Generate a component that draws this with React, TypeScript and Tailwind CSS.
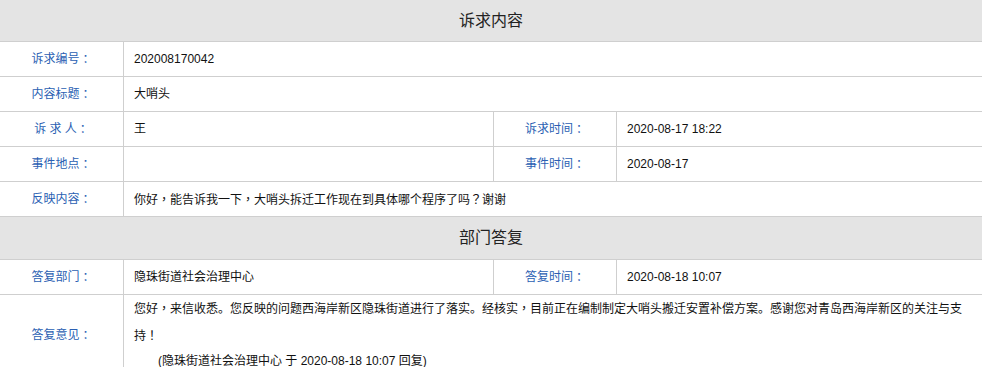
const font = { fontFamily: '"Liberation Sans", "Noto Sans CJK SC", sans-serif' };
const tc = { fontFamily: '"Noto Sans CJK TC", sans-serif' };

function Header({ title, tall }: { title: string; tall?: boolean }) {
  return (
    <div
      className={
        "flex items-center justify-center bg-[#e4e4e4] border-b border-[#cfcfcf] text-[16px] text-[#222] " +
        (tall ? "h-[43px]" : "h-[42px]")
      }
    >
      {title}
    </div>
  );
}

// full-width colon sits centred in its em box, as in the original page
function Label({ text, w = "w-[124px]" }: { text: string; w?: string }) {
  return (
    <div className={w + " shrink-0 flex items-center justify-center border-r border-[#cfcfcf] text-[#2b5fb3]"}>
      <span className="whitespace-pre">{text}</span>
      <span style={tc}>：</span>
    </div>
  );
}

function Row({ label, value }: { label: string; value: React.ReactNode }) {
  return (
    <div className="flex h-[35px] border-b border-[#cfcfcf]">
      <Label text={label} />
      <div className="flex-1 flex items-center pl-[10px]">{value}</div>
    </div>
  );
}

function Row2({ label, value, label2, value2 }: { label: string; value: string; label2: string; value2: string }) {
  return (
    <div className="flex h-[35px] border-b border-[#cfcfcf]">
      <Label text={label} />
      <div className="w-[370px] shrink-0 flex items-center pl-[10px] border-r border-[#cfcfcf]">{value}</div>
      <Label text={label2} w="w-[123px]" />
      <div className="flex-1 flex items-center pl-[10px]">{value2}</div>
    </div>
  );
}

const C = () => <span style={tc}>，</span>;

export default function App() {
  return (
    <div className="w-[982px] bg-white text-[12px] text-[#111]" style={font}>
      <Header title="诉求内容" />
      <Row label="诉求编号" value="202008170042" />
      <Row label="内容标题" value="大哨头" />
      <Row2 label="诉 求 人" value="王" label2="诉求时间" value2="2020-08-17 18:22" />
      <Row2 label="事件地点" value="" label2="事件时间" value2="2020-08-17" />
      <Row
        label="反映内容"
        value={
          <span>
            你好<C />能告诉我一下<C />大哨头拆迁工作现在到具体哪个程序了吗<span style={tc}>？</span>谢谢
          </span>
        }
      />
      <Header title="部门答复" tall />
      <Row2 label="答复部门" value="隐珠街道社会治理中心" label2="答复时间" value2="2020-08-18 10:07" />
      <div className="flex border-b border-[#cfcfcf]">
        <Label text="答复意见" />
        <div className="flex-1 pl-[10px] pr-[10px] leading-[25px]">
          <p>
            您好<C />来信收悉。您反映的问题西海岸新区隐珠街道进行了落实。经核实<C />目前正在编制制定大哨头搬迁安置补偿方案。感谢您对青岛西海岸新区的关注与支持<span style={tc}>！</span>
          </p>
          <p className="pl-[24px]">(隐珠街道社会治理中心 于 2020-08-18 10:07 回复)</p>
        </div>
      </div>
    </div>
  );
}
